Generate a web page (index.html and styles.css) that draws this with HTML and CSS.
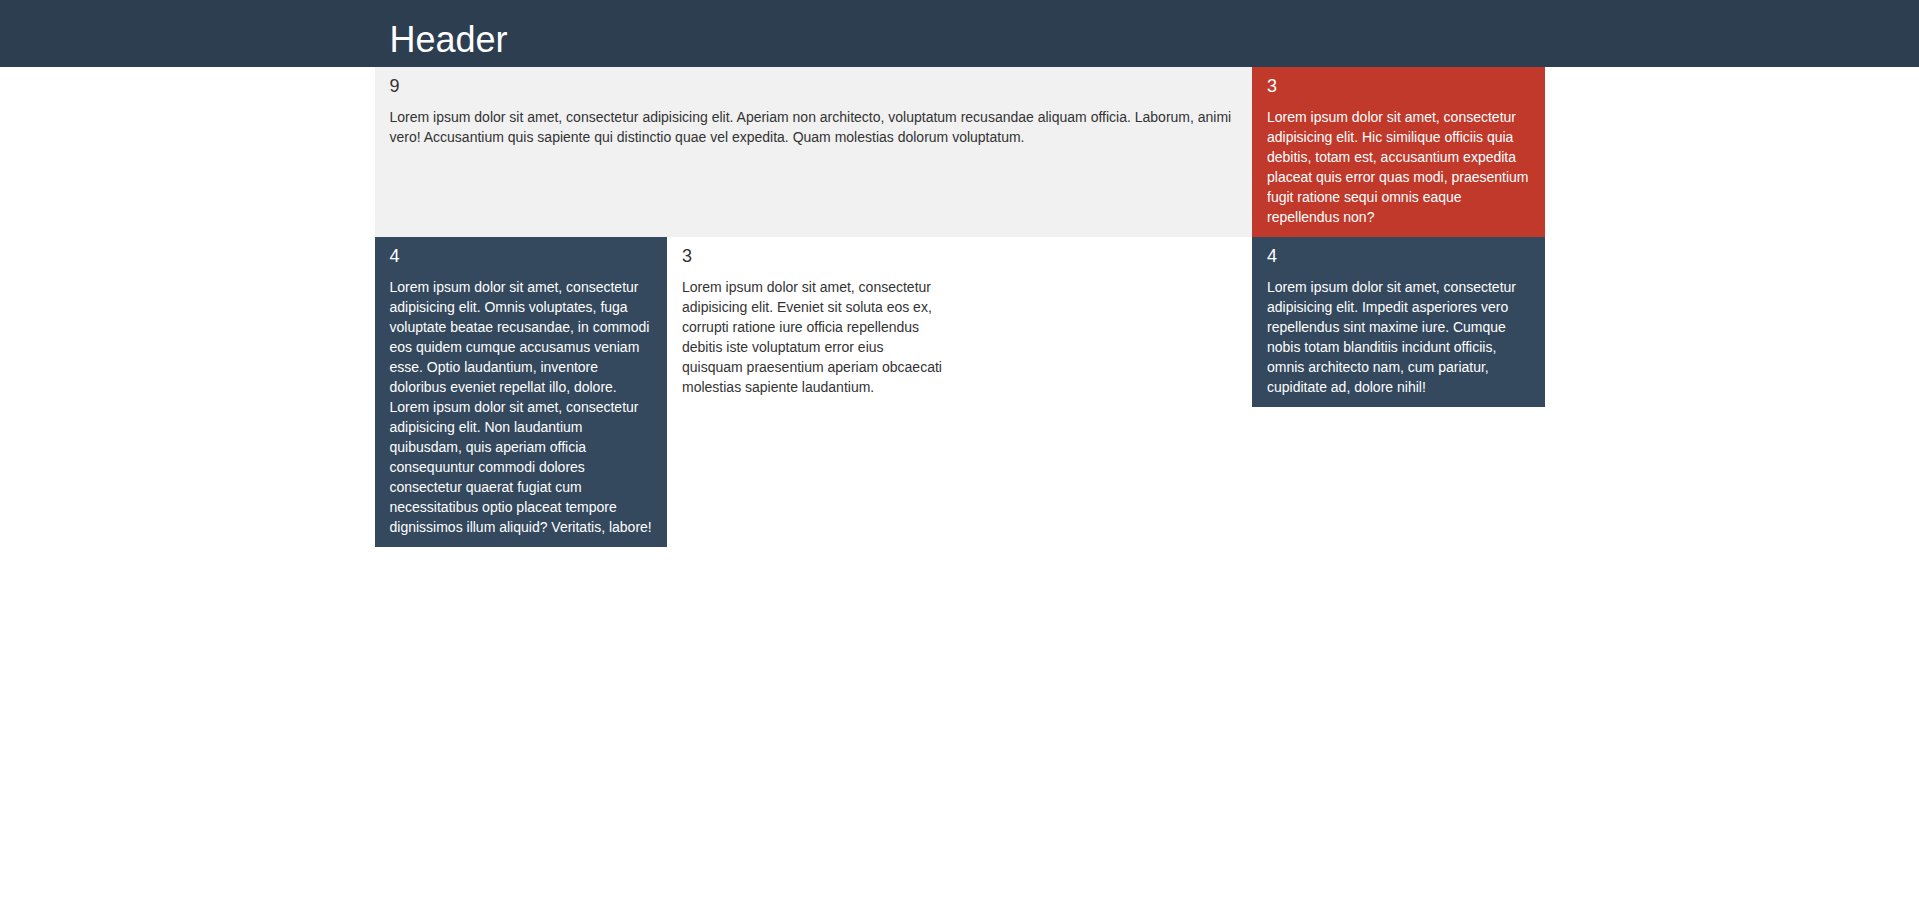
FILE: index.html
```html
<!DOCTYPE html>
<html lang="en">
<head>
<meta charset="utf-8">
<title>Grid</title>
<link rel="stylesheet" href="styles.css">
</head>
<body>
<header class="site-header">
  <div class="container">
    <h1 class="site-title">Header</h1>
  </div>
</header>
<main class="container">
  <div class="row row-stretch">
    <section class="col col-9 tone-light">
      <h4 class="col-title">9</h4>
      <p class="col-text">Lorem ipsum dolor sit amet, consectetur adipisicing elit. Aperiam non architecto, voluptatum recusandae aliquam officia. Laborum, animi vero! Accusantium quis sapiente qui distinctio quae vel expedita. Quam molestias dolorum voluptatum.</p>
    </section>
    <section class="col col-3 tone-red">
      <h4 class="col-title">3</h4>
      <p class="col-text">Lorem ipsum dolor sit amet, consectetur adipisicing elit. Hic similique officiis quia debitis, totam est, accusantium expedita placeat quis error quas modi, praesentium fugit ratione sequi omnis eaque repellendus non?</p>
    </section>
  </div>
  <div class="row row-top">
    <section class="col col-3 tone-dark">
      <h4 class="col-title">4</h4>
      <p class="col-text">Lorem ipsum dolor sit amet, consectetur adipisicing elit. Omnis voluptates, fuga voluptate beatae recusandae, in commodi eos quidem cumque accusamus veniam esse. Optio laudantium, inventore doloribus eveniet repellat illo, dolore. Lorem ipsum dolor sit amet, consectetur adipisicing elit. Non laudantium quibusdam, quis aperiam officia consequuntur commodi dolores consectetur quaerat fugiat cum necessitatibus optio placeat tempore dignissimos illum aliquid? Veritatis, labore!</p>
    </section>
    <section class="col col-3 tone-plain">
      <h4 class="col-title">3</h4>
      <p class="col-text">Lorem ipsum dolor sit amet, consectetur adipisicing elit. Eveniet sit soluta eos ex, corrupti ratione iure officia repellendus debitis iste voluptatum error eius quisquam praesentium aperiam obcaecati molestias sapiente laudantium.</p>
    </section>
    <section class="col col-3 col-offset-3 tone-dark">
      <h4 class="col-title">4</h4>
      <p class="col-text">Lorem ipsum dolor sit amet, consectetur adipisicing elit. Impedit asperiores vero repellendus sint maxime iure. Cumque nobis totam blanditiis incidunt officiis, omnis architecto nam, cum pariatur, cupiditate ad, dolore nihil!</p>
    </section>
  </div>
</main>
</body>
</html>
```

FILE: styles.css
```css
* {
  box-sizing: border-box;
}

html, body {
  margin: 0;
  padding: 0;
}

body {
  font-family: "Liberation Sans", Arial, Helvetica, sans-serif;
  font-size: 14px;
  line-height: 20px;
  color: #333333;
  background: #ffffff;
}

.container {
  width: 1170px;
  margin: 0 auto;
  padding: 0 15px;
}

.site-header {
  background: #2c3e50;
  height: 67px;
}

.site-title {
  margin: 0;
  padding-top: 20px;
  font-size: 36px;
  font-weight: 500;
  line-height: 1.1;
  color: #ffffff;
}

.row {
  display: flex;
  margin: 0 -15px;
}

.row-stretch {
  align-items: stretch;
}

.row-top {
  align-items: flex-start;
}

.col {
  padding: 0 15px;
  display: flow-root;
}

.col-9 {
  width: 75%;
}

.col-3 {
  width: 25%;
}

.col-offset-3 {
  margin-left: 25%;
}

.col-title {
  margin: 10px 0;
  font-size: 18px;
  font-weight: 500;
  line-height: 1.1;
}

.col-text {
  margin: 0 0 10px;
}

.tone-light {
  background: #f1f1f1;
}

.tone-red {
  background: #c0392b;
  color: #ffffff;
}

.tone-dark {
  background: #34495e;
  color: #ffffff;
}

.tone-plain {
  background: #ffffff;
}
```
